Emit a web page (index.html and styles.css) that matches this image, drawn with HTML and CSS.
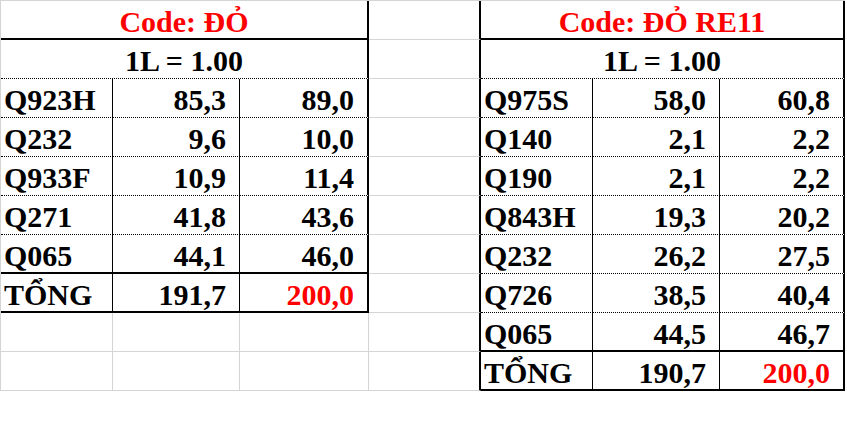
FILE: index.html
```html
<!DOCTYPE html>
<html lang="vi">
<head>
<meta charset="utf-8">
<title>Code: ĐỎ</title>
<link rel="stylesheet" href="styles.css">
</head>
<body>
<div class="sheet">
  <!-- row 1 -->
  <div class="c merged title">Code: ĐỎ</div>
  <div class="c gap edge"></div>
  <div class="c merged title">Code: ĐỎ RE11</div>
  <!-- row 2 -->
  <div class="c merged sub">1L = 1.00</div>
  <div class="c gap edge"></div>
  <div class="c merged sub">1L = 1.00</div>
  <!-- row 3 -->
  <div class="c lbl dot">Q923H</div><div class="c num dot">85,3</div><div class="c num end dot">89,0</div>
  <div class="c gap edge"></div>
  <div class="c lbl dot">Q975S</div><div class="c num dot">58,0</div><div class="c num end dot">60,8</div>
  <!-- row 4 -->
  <div class="c lbl dot">Q232</div><div class="c num dot">9,6</div><div class="c num end dot">10,0</div>
  <div class="c gap edge"></div>
  <div class="c lbl dot">Q140</div><div class="c num dot">2,1</div><div class="c num end dot">2,2</div>
  <!-- row 5 -->
  <div class="c lbl dot">Q933F</div><div class="c num dot">10,9</div><div class="c num end dot">11,4</div>
  <div class="c gap edge"></div>
  <div class="c lbl dot">Q190</div><div class="c num dot">2,1</div><div class="c num end dot">2,2</div>
  <!-- row 6 -->
  <div class="c lbl dot">Q271</div><div class="c num dot">41,8</div><div class="c num end dot">43,6</div>
  <div class="c gap edge"></div>
  <div class="c lbl dot">Q843H</div><div class="c num dot">19,3</div><div class="c num end dot">20,2</div>
  <!-- row 7 -->
  <div class="c lbl thick">Q065</div><div class="c num thick">44,1</div><div class="c num end thick">46,0</div>
  <div class="c gap edge"></div>
  <div class="c lbl dot">Q232</div><div class="c num dot">26,2</div><div class="c num end dot">27,5</div>
  <!-- row 8 -->
  <div class="c lbl thick">TỔNG</div><div class="c num thick">191,7</div><div class="c num end thick red">200,0</div>
  <div class="c gap edge"></div>
  <div class="c lbl dot">Q726</div><div class="c num dot">38,5</div><div class="c num end dot">40,4</div>
  <!-- row 9 -->
  <div class="c"></div><div class="c"></div><div class="c"></div>
  <div class="c gap edge"></div>
  <div class="c lbl thick">Q065</div><div class="c num thick">44,5</div><div class="c num end thick">46,7</div>
  <!-- row 10 -->
  <div class="c"></div><div class="c"></div><div class="c"></div>
  <div class="c gap edge"></div>
  <div class="c lbl thick">TỔNG</div><div class="c num thick">190,7</div><div class="c num end thick red">200,0</div>
</div>
</body>
</html>
```
FILE: styles.css
```css
html, body {
  margin: 0;
  padding: 0;
  background: #ffffff;
}

.sheet {
  display: grid;
  grid-template-columns: 112px 127px 129px 112px 112px 127px 125px;
  grid-template-rows: repeat(10, 39px);
  width: max-content;
  border-top: 1px solid #d4d4d4;
  border-left: 1px solid #d4d4d4;
  font-family: "Liberation Serif", "Times New Roman", serif;
  font-weight: bold;
  font-size: 30px;
  color: #000000;
}

.c {
  box-sizing: border-box;
  border-right: 1px solid #d4d4d4;
  border-bottom: 1px solid #d4d4d4;
  padding: 3px 13px 0 3px;
  line-height: 35px;
  white-space: nowrap;
}

.merged {
  grid-column: span 3;
  text-align: center;
  border-right: 2px solid #000000;
  padding-left: 0;
  padding-right: 0;
}

.title {
  color: #ff0000;
  border-bottom: 2px solid #000000;
}

.sub {
  border-bottom: 1px dotted #000000;
}

.gap.edge {
  border-right: 2px solid #000000;
}

.lbl {
  text-align: left;
  border-right: 1px solid #000000;
}

.num {
  text-align: right;
  border-right: 1px solid #000000;
}

.num.end {
  border-right: 2px solid #000000;
}

.dot {
  border-bottom: 1px dotted #000000;
}

.thick {
  border-bottom: 2px solid #000000;
}

.red {
  color: #ff0000;
}
```
